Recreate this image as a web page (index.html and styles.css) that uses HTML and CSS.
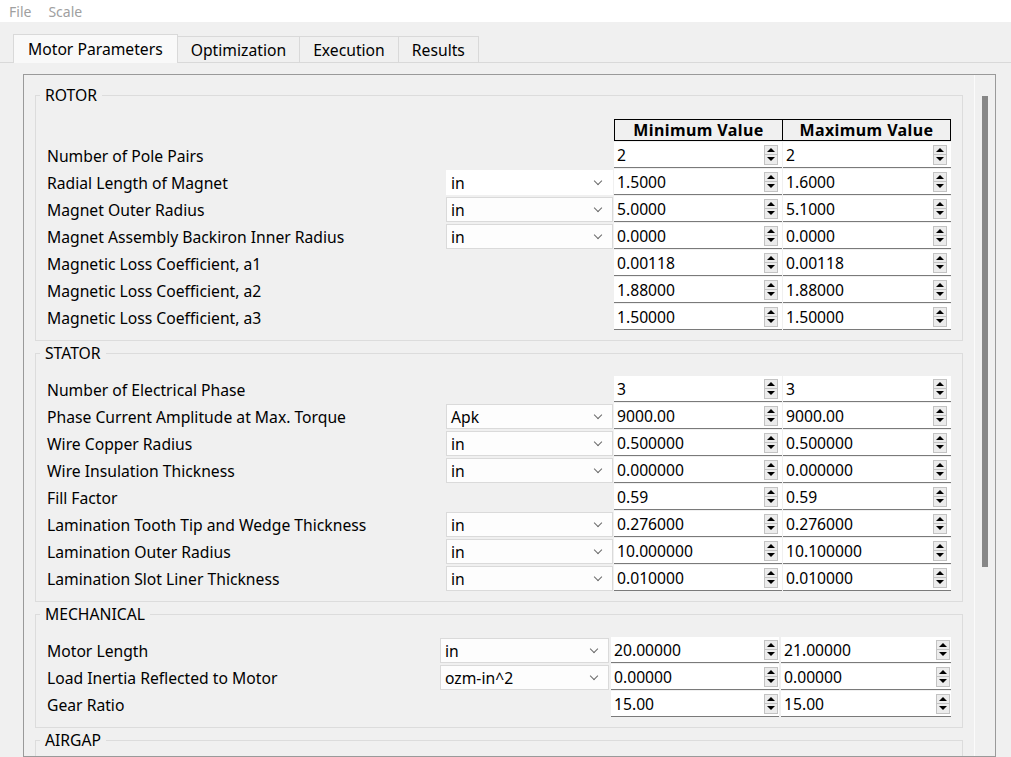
FILE: index.html
```html
<!DOCTYPE html>
<html lang="en">
<head>
<meta charset="utf-8">
<title>Motor Parameters</title>
<link rel="stylesheet" href="styles.css">
</head>
<body>
<div class="menubar"><span class="menu-item">File</span><span class="menu-item">Scale</span></div>
<div class="tabbar">
  <div class="tab selected">Motor Parameters</div>
  <div class="tab">Optimization</div>
  <div class="tab">Execution</div>
  <div class="tab">Results</div>
</div>
<div class="pane">
  <div class="frame">
    <div class="content">
      <fieldset class="group rotor">
        <legend>ROTOR</legend>
        <div class="grid">
          <div class="hdr hdr-min">Minimum Value</div>
          <div class="hdr hdr-max">Maximum Value</div>

          <div class="label">Number of Pole Pairs</div><div></div>
          <div class="spin"><span class="val">2</span><span class="btns"><i class="up"></i><i class="dn"></i></span></div>
          <div class="spin"><span class="val">2</span><span class="btns"><i class="up"></i><i class="dn"></i></span></div>

          <div class="label">Radial Length of Magnet</div>
          <div class="combo first">in</div>
          <div class="spin"><span class="val">1.5000</span><span class="btns"><i class="up"></i><i class="dn"></i></span></div>
          <div class="spin"><span class="val">1.6000</span><span class="btns"><i class="up"></i><i class="dn"></i></span></div>

          <div class="label">Magnet Outer Radius</div>
          <div class="combo">in</div>
          <div class="spin"><span class="val">5.0000</span><span class="btns"><i class="up"></i><i class="dn"></i></span></div>
          <div class="spin"><span class="val">5.1000</span><span class="btns"><i class="up"></i><i class="dn"></i></span></div>

          <div class="label">Magnet Assembly Backiron Inner Radius</div>
          <div class="combo">in</div>
          <div class="spin"><span class="val">0.0000</span><span class="btns"><i class="up"></i><i class="dn"></i></span></div>
          <div class="spin"><span class="val">0.0000</span><span class="btns"><i class="up"></i><i class="dn"></i></span></div>

          <div class="label">Magnetic Loss Coefficient, a1</div><div></div>
          <div class="spin"><span class="val">0.00118</span><span class="btns"><i class="up"></i><i class="dn"></i></span></div>
          <div class="spin"><span class="val">0.00118</span><span class="btns"><i class="up"></i><i class="dn"></i></span></div>

          <div class="label">Magnetic Loss Coefficient, a2</div><div></div>
          <div class="spin"><span class="val">1.88000</span><span class="btns"><i class="up"></i><i class="dn"></i></span></div>
          <div class="spin"><span class="val">1.88000</span><span class="btns"><i class="up"></i><i class="dn"></i></span></div>

          <div class="label">Magnetic Loss Coefficient, a3</div><div></div>
          <div class="spin"><span class="val">1.50000</span><span class="btns"><i class="up"></i><i class="dn"></i></span></div>
          <div class="spin"><span class="val">1.50000</span><span class="btns"><i class="up"></i><i class="dn"></i></span></div>
        </div>
      </fieldset>

      <fieldset class="group stator">
        <legend>STATOR</legend>
        <div class="grid">
          <div class="label">Number of Electrical Phase</div><div></div>
          <div class="spin"><span class="val">3</span><span class="btns"><i class="up"></i><i class="dn"></i></span></div>
          <div class="spin"><span class="val">3</span><span class="btns"><i class="up"></i><i class="dn"></i></span></div>

          <div class="label">Phase Current Amplitude at Max. Torque</div>
          <div class="combo">Apk</div>
          <div class="spin"><span class="val">9000.00</span><span class="btns"><i class="up"></i><i class="dn"></i></span></div>
          <div class="spin"><span class="val">9000.00</span><span class="btns"><i class="up"></i><i class="dn"></i></span></div>

          <div class="label">Wire Copper Radius</div>
          <div class="combo">in</div>
          <div class="spin"><span class="val">0.500000</span><span class="btns"><i class="up"></i><i class="dn"></i></span></div>
          <div class="spin"><span class="val">0.500000</span><span class="btns"><i class="up"></i><i class="dn"></i></span></div>

          <div class="label">Wire Insulation Thickness</div>
          <div class="combo">in</div>
          <div class="spin"><span class="val">0.000000</span><span class="btns"><i class="up"></i><i class="dn"></i></span></div>
          <div class="spin"><span class="val">0.000000</span><span class="btns"><i class="up"></i><i class="dn"></i></span></div>

          <div class="label">Fill Factor</div><div></div>
          <div class="spin"><span class="val">0.59</span><span class="btns"><i class="up"></i><i class="dn"></i></span></div>
          <div class="spin"><span class="val">0.59</span><span class="btns"><i class="up"></i><i class="dn"></i></span></div>

          <div class="label">Lamination Tooth Tip and Wedge Thickness</div>
          <div class="combo">in</div>
          <div class="spin"><span class="val">0.276000</span><span class="btns"><i class="up"></i><i class="dn"></i></span></div>
          <div class="spin"><span class="val">0.276000</span><span class="btns"><i class="up"></i><i class="dn"></i></span></div>

          <div class="label">Lamination Outer Radius</div>
          <div class="combo">in</div>
          <div class="spin"><span class="val">10.000000</span><span class="btns"><i class="up"></i><i class="dn"></i></span></div>
          <div class="spin"><span class="val">10.100000</span><span class="btns"><i class="up"></i><i class="dn"></i></span></div>

          <div class="label">Lamination Slot Liner Thickness</div>
          <div class="combo">in</div>
          <div class="spin"><span class="val">0.010000</span><span class="btns"><i class="up"></i><i class="dn"></i></span></div>
          <div class="spin"><span class="val">0.010000</span><span class="btns"><i class="up"></i><i class="dn"></i></span></div>
        </div>
      </fieldset>

      <fieldset class="group mechanical">
        <legend>MECHANICAL</legend>
        <div class="grid">
          <div class="label">Motor Length</div>
          <div class="combo">in</div>
          <div class="spin"><span class="val">20.00000</span><span class="btns"><i class="up"></i><i class="dn"></i></span></div>
          <div class="spin"><span class="val">21.00000</span><span class="btns"><i class="up"></i><i class="dn"></i></span></div>

          <div class="label">Load Inertia Reflected to Motor</div>
          <div class="combo">ozm-in^2</div>
          <div class="spin"><span class="val">0.00000</span><span class="btns"><i class="up"></i><i class="dn"></i></span></div>
          <div class="spin"><span class="val">0.00000</span><span class="btns"><i class="up"></i><i class="dn"></i></span></div>

          <div class="label">Gear Ratio</div><div></div>
          <div class="spin"><span class="val">15.00</span><span class="btns"><i class="up"></i><i class="dn"></i></span></div>
          <div class="spin"><span class="val">15.00</span><span class="btns"><i class="up"></i><i class="dn"></i></span></div>
        </div>
      </fieldset>

      <fieldset class="group airgap">
        <legend>AIRGAP</legend>
      </fieldset>
    </div>
    <div class="scrollbar"><div class="thumb"></div></div>
  </div>
</div>
</body>
</html>
```
FILE: styles.css
```css
html, body {
  margin: 0;
  padding: 0;
  height: 100%;
  overflow: hidden;
}
body {
  background: #f0f0f0;
  font-family: "Noto Sans", "Open Sans", sans-serif;
  font-size: 15.7px;
  color: #000;
}

/* menu bar */
.menubar {
  height: 22px;
  background: #fff;
  display: flex;
  align-items: center;
  padding-left: 9px;
  gap: 17px;
  font-size: 14px;
  color: #a0a0a0;
}

/* tabs */
.tabbar {
  display: flex;
  align-items: flex-end;
  height: 28px;
  margin-top: 12px;
  padding-left: 13px;
}
.tab {
  height: 25px;
  line-height: 26px;
  padding: 0 13px;
  border: 1px solid #d9d9d9;
  border-bottom: none;
  margin-left: -1px;
  background: #f0f0f0;
  white-space: nowrap;
}
.tab.selected {
  margin-left: 0;
  padding: 0 14px;
  height: 28px;
  line-height: 28px;
  margin-bottom: -1px;
  background: #f9f9f9;
  position: relative;
  z-index: 1;
}

/* pane & frame */
.pane {
  border-top: 1px solid #d9d9d9;
  padding: 11px 15px 0 23px;
}
.frame {
  height: 681px;
  border: 1px solid #9a9a9a;
  display: flex;
  overflow: hidden;
}
.content {
  flex: 1;
  padding: 10px 11px 0;
  overflow: hidden;
}
.scrollbar {
  width: 20px;
  border-left: 1px solid #fbfbfb;
  padding-top: 21px;
}
.thumb {
  width: 6px;
  height: 471px;
  margin-left: 7px;
  background: #878787;
}

/* group boxes */
.group {
  margin: 2px 0 0;
  padding: 13px 11px 10px;
  border: 1px solid #dcdcdc;
  min-width: 0;
}
.group.rotor {
  margin-top: 0;
  padding-top: 14px;
}
.group legend {
  margin-left: -7px;
  padding: 0 5px;
  line-height: 20px;
  font-size: 15.7px;
}
.group.airgap {
  height: 60px;
}

.grid {
  display: grid;
  grid-template-columns: 398px 167px 168px 168px;
  grid-auto-rows: 26px;
  column-gap: 1px;
  row-gap: 1px;
}
.rotor .grid {
  grid-template-rows: 22px;
}
.mechanical .grid {
  grid-template-columns: 391px 169px 168px 170px;
  column-gap: 2px;
}

.label {
  line-height: 28px;
  white-space: nowrap;
}

/* header */
.hdr {
  border: 1px solid #000;
  font-weight: bold;
  font-size: 16px;
  letter-spacing: 0.4px;
  text-align: center;
  line-height: 20px;
  margin-right: -1px;
}
.hdr-min {
  grid-column: 3;
}
.hdr-max {
  grid-column: 4;
  margin-right: 0;
  border-left: none;
}

/* combo */
.combo {
  height: 23px;
  margin-top: 1px;
  border: 1px solid #dadada;
  background: #fdfdfd;
  padding-left: 4px;
  line-height: 25px;
  position: relative;
}
.combo.first {
  border-color: #fff;
  background: #fff;
}
.combo::after {
  content: "";
  position: absolute;
  right: 11px;
  top: 7px;
  width: 5px;
  height: 5px;
  border-right: 1px solid #6a6a6a;
  border-bottom: 1px solid #6a6a6a;
  transform: rotate(45deg);
}

/* spin box */
.spin {
  background: #fff;
  border-bottom: 1px solid #7a7a7a;
  display: flex;
  align-items: center;
  padding-left: 3px;
  padding-right: 4px;
}
.mechanical .spin {
  padding-right: 1px;
}
.spin .val {
  flex: 1;
  line-height: 25px;
  padding-top: 2px;
}
.btns {
  display: flex;
  flex-direction: column;
  width: 14px;
}
.btns i {
  display: flex;
  align-items: center;
  justify-content: center;
  height: 8px;
  border: 1px solid #c3c3c3;
  background: #ececec;
}
.btns i.dn {
  margin-top: -1px;
  height: 9px;
}
.btns i::after {
  content: "";
  width: 0;
  height: 0;
  border-left: 4px solid transparent;
  border-right: 4px solid transparent;
}
.btns i.up::after {
  border-bottom: 4px solid #000;
}
.btns i.dn::after {
  border-top: 4px solid #000;
}
```
